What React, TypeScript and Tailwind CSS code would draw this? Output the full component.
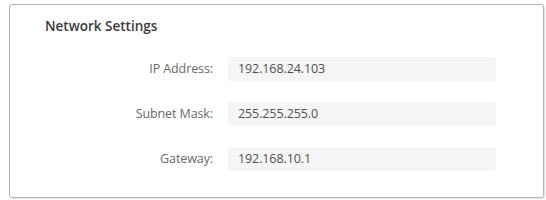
import React from "react";

const rows = [
  { label: "IP Address:", value: "192.168.24.103" },
  { label: "Subnet Mask:", value: "255.255.255.0" },
  { label: "Gateway:", value: "192.168.10.1" },
];

export default function App() {
  return (
    <div
      className="w-[546px] h-[200px] bg-white pl-[9px] pt-[4px]"
      style={{ fontFamily: '"Open Sans", "Noto Sans", sans-serif' }}
    >
      <div className="w-[535px] h-[194px] border border-[#b3b3b3] rounded-[3px] shadow-[1px_1px_1px_rgba(0,0,0,0.12)] bg-white pl-[35px] pt-[12px]">
        <div className="text-[13.5px] leading-[18px] font-semibold text-[#3a3a3a]">
          Network Settings
        </div>
        <div className="mt-[22px] flex flex-col gap-[21px]">
          {rows.map((r) => (
            <div key={r.label} className="flex items-center h-[24px]">
              <div className="w-[168px] text-right text-[12.5px] text-[#6a6a6a] tracking-[-0.1px]">
                {r.label}
              </div>
              <div className="ml-[15px] w-[268px] h-[24px] bg-[#f5f5f5] rounded-[2px] flex items-center pl-[10px] text-[12.5px] text-[#505050] tracking-[-0.1px]">
                {r.value}
              </div>
            </div>
          ))}
        </div>
      </div>
    </div>
  );
}
